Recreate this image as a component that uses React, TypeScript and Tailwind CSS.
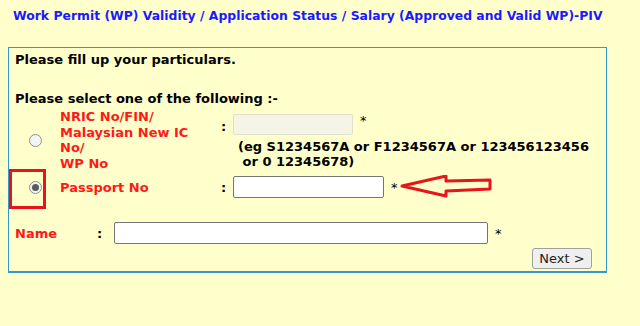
import React from "react";

function Radio({ checked }: { checked?: boolean }) {
  return (
    <div className="w-[13px] h-[13px] rounded-full border border-[#8f8f8f] bg-[#f4f4f4] flex items-center justify-center">
      {checked && <div className="w-[7px] h-[7px] rounded-full bg-[#5a5a5a]" />}
    </div>
  );
}

export default function App() {
  return (
    <div className="w-[640px] h-[326px] bg-[#ffffcc] overflow-hidden font-['DejaVu_Sans',sans-serif] font-bold text-[13px] leading-[15px] text-black">
      <div className="pt-[8px] pl-[13px] whitespace-nowrap text-[#1a1aff] text-[12.4px] leading-[16px]">
        Work Permit (WP) Validity / Application Status / Salary (Approved and Valid WP)-PIV
      </div>
      <div className="mt-[23px] ml-[8px] w-[599px] h-[226px] border border-[#3399cc] border-b-2 relative">
        <div className="pl-[6px] pt-[4px]">Please fill up your particulars.</div>
        <div className="pl-[6px] pt-[24px]">Please select one of the following :-</div>

        <div className="flex mt-[3px]">
          <div className="w-[51px] flex items-center justify-center pl-[1px]">
            <Radio />
          </div>
          <div className="w-[161px] text-[#ff1a1a] leading-[15.5px]">
            NRIC No/FIN/
            <br />
            Malaysian New IC
            <br />
            No/
            <br />
            WP No
          </div>
          <div className="w-[12px] pt-[10px]">:</div>
          <div className="pt-[5px]">
            <div className="flex items-start">
              <div className="w-[120px] h-[21px] bg-[#f5f5e6] border border-[#e0e0d0] rounded-[2px]" />
              <span className="ml-[7px] -mt-[1px] font-normal">*</span>
            </div>
            <div className="mt-[4px] pl-[5px] leading-[15px] whitespace-nowrap">
              (eg S1234567A or F1234567A or 123456123456
              <br />
              &nbsp;or 0 12345678)
            </div>
          </div>
        </div>

        <div className="flex items-center mt-[5px] h-[22px]">
          <div className="w-[51px] flex items-center justify-center pl-[1px] relative">
            <Radio checked />
            <div className="absolute left-[0px] top-[-12px] w-[37px] h-[40px] border-[3px] border-[#e8141c]" />
          </div>
          <div className="w-[161px] text-[#ff1a1a]">Passport No</div>
          <div className="w-[12px]">:</div>
          <div className="w-[151px] h-[22px] bg-white border border-[#767676] rounded-[2px]" />
          <span className="ml-[7px] font-normal">*</span>
          <svg width="96" height="24" viewBox="0 0 96 24" className="ml-[1px]">
            <polygon
              points="3,11 47,1 47,6 91,5 91,14 47,16 47,21"
              fill="none"
              stroke="#e8141c"
              strokeWidth="3"
              strokeLinejoin="round"
            />
          </svg>
        </div>

        <div className="flex items-center mt-[24px] h-[22px]">
          <div className="w-[88px] pl-[6px] text-[#ff1a1a]">Name</div>
          <div className="w-[17px]">:</div>
          <div className="w-[374px] h-[22px] bg-white border border-[#767676] rounded-[2px]" />
          <span className="ml-[7px] font-normal">*</span>
        </div>

        <div className="flex justify-end pr-[14px] mt-[4px]">
          <div className="w-[60px] h-[21px] bg-[#efefef] border border-[#a0a0a0] rounded-[3px] font-normal text-[13px] text-[#222] flex items-center justify-center">
            Next &gt;
          </div>
        </div>
      </div>
    </div>
  );
}
